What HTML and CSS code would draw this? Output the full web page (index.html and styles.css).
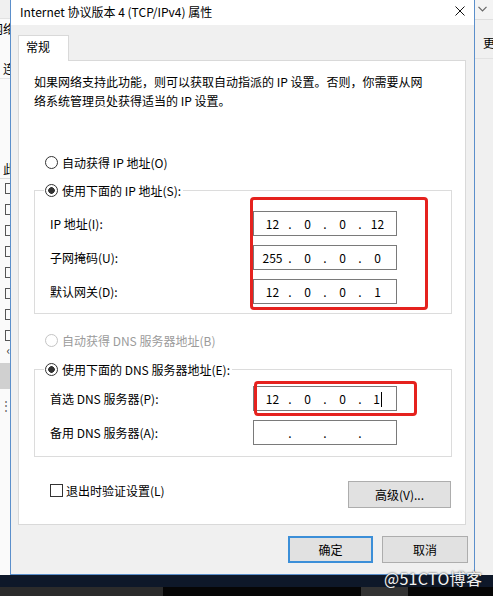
FILE: index.html
```html
<!DOCTYPE html>
<html lang="zh-CN">
<head>
<meta charset="utf-8">
<title>Internet 协议版本 4 (TCP/IPv4) 属性</title>
<link rel="stylesheet" href="styles.css">
</head>
<body>
<div class="screen">
  <div class="desk">
    <div class="bg-left">
      <div class="bl-top"></div>
      <div class="bl-row bl-t1"><span>网络</span></div>
      <div class="bl-row bl-t2"><span>连</span></div>
      <div class="bl-row bl-t3"><span>此</span></div>
      <div class="bl-checks">
        <i></i><i></i><i></i><i></i><i></i><i></i><i></i><i></i>
      </div>
      <div class="bl-arrow">‹</div>
      <div class="bl-gray"></div>
      <div class="bl-dots">⋮</div>
    </div>

    <div class="dialog">
      <div class="titlebar">
        <span class="title">Internet 协议版本 4 (TCP/IPv4) 属性</span>
        <span class="close"><svg width="10" height="10" viewBox="0 0 10 10"><path d="M0.5 0.5 L9.5 9.5 M9.5 0.5 L0.5 9.5" stroke="#111" stroke-width="1" fill="none"/></svg></span>
      </div>
      <div class="body">
        <div class="tabs"><div class="tab">常规</div></div>
        <div class="panel">
          <p class="intro">如果网络支持此功能，则可以获取自动指派的 IP 设置。否则，你需要从网<br>络系统管理员处获得适当的 IP 设置。</p>

          <div class="opt opt1"><span class="radio"></span><span>自动获得 IP 地址(O)</span></div>

          <fieldset class="group group1">
            <legend><span class="radio on"></span><span>使用下面的 IP 地址(S):</span></legend>
            <div class="gbody gbody1">
              <div class="fields">
                <span class="lbl">IP 地址(I):</span>
                <div class="ip"><span class="seg">12</span><span class="dot">.</span><span class="seg">0</span><span class="dot">.</span><span class="seg">0</span><span class="dot">.</span><span class="seg">12</span></div>
                <span class="lbl">子网掩码(U):</span>
                <div class="ip"><span class="seg">255</span><span class="dot">.</span><span class="seg">0</span><span class="dot">.</span><span class="seg">0</span><span class="dot">.</span><span class="seg">0</span></div>
                <span class="lbl">默认网关(D):</span>
                <div class="ip"><span class="seg">12</span><span class="dot">.</span><span class="seg">0</span><span class="dot">.</span><span class="seg">0</span><span class="dot">.</span><span class="seg">1</span></div>
                <div class="mark mark1"></div>
              </div>
            </div>
          </fieldset>

          <div class="opt opt2 disabled"><span class="radio off"></span><span>自动获得 DNS 服务器地址(B)</span></div>

          <fieldset class="group group2">
            <legend><span class="radio on"></span><span>使用下面的 DNS 服务器地址(E):</span></legend>
            <div class="gbody gbody2">
              <div class="fields">
                <span class="lbl">首选 DNS 服务器(P):</span>
                <div class="ip"><span class="seg">12</span><span class="dot">.</span><span class="seg">0</span><span class="dot">.</span><span class="seg">0</span><span class="dot">.</span><span class="seg">1<span class="caret"></span></span></div>
                <span class="lbl">备用 DNS 服务器(A):</span>
                <div class="ip"><span class="seg"></span><span class="dot">.</span><span class="seg"></span><span class="dot">.</span><span class="seg"></span><span class="dot">.</span><span class="seg"></span></div>
                <div class="mark mark2"></div>
              </div>
            </div>
          </fieldset>

          <div class="bottom-row">
            <div class="check"><span class="box"></span><span>退出时验证设置(L)</span></div>
            <div class="btn adv">高级(V)...</div>
          </div>
        </div>
        <div class="buttons">
          <div class="btn ok">确定</div>
          <div class="btn cancel">取消</div>
        </div>
      </div>
    </div>

    <div class="bg-right">
      <div class="br-top"><svg class="chev" width="9" height="6" viewBox="0 0 9 6"><path d="M0.5 0.8 L4.5 4.8 L8.5 0.8" stroke="#666" stroke-width="1.2" fill="none"/></svg></div>
      <div class="br-row"><span>更</span></div>
    </div>
  </div>
  <div class="taskbar">
    <div class="tb-top"></div>
    <div class="tb-bottom">
      <span class="s1"></span><span class="s2"></span><span class="s3"></span><span class="s4"></span>
    </div>
  </div>
  <div class="watermark">@51CTO博客</div>
</div>
</body>
</html>
```

FILE: styles.css
```css
html, body {
  margin: 0;
  padding: 0;
}
body {
  font-family: "Noto Sans CJK SC", "Noto Sans", sans-serif;
  font-size: 12px;
  color: #000;
  background: #0d1626;
}
.screen {
  position: relative;
  width: 493px;
  height: 596px;
  overflow: hidden;
}
.desk {
  display: flex;
  height: 575px;
}

/* background window, left */
.bg-left {
  width: 10px;
  flex: none;
  background: #fafafa;
  overflow: hidden;
  display: flex;
  flex-direction: column;
}
.bl-top {
  height: 18px;
  background: #f0f0f0;
  border-bottom: 1px solid #e2e2e2;
}
.bl-row {
  display: flex;
  justify-content: flex-end;
  height: 19px;
  line-height: 19px;
  font-size: 12px;
  white-space: nowrap;
}
.bl-row span {
  margin-right: -5px;
}
.bl-t1 { margin-top: 0; }
.bl-t2 {
  margin-top: 21px;
  border-bottom: 1px solid #e5e5e5;
}
.bl-t3 {
  margin-top: 80px;
  border-bottom: 1px solid #dcdcdc;
}
.bl-checks {
  display: flex;
  flex-direction: column;
  align-items: flex-end;
  gap: 10px;
  padding-top: 4px;
}
.bl-checks i {
  display: block;
  width: 4px;
  height: 9px;
  border: 1px solid #555;
  border-right: none;
  margin-right: 0;
}
.bl-arrow {
  text-align: right;
  font-size: 12px;
  line-height: 14px;
  height: 14px;
  margin-top: 2px;
  color: #333;
}
.bl-gray {
  height: 26px;
  margin-top: 6px;
  background: #d0d0d0;
}
.bl-dots {
  text-align: right;
  line-height: 16px;
  margin-top: 8px;
  color: #666;
}

/* dialog */
.dialog {
  width: 465px;
  height: 575px;
  flex: none;
  box-sizing: border-box;
  border: 1px solid #5b8fcb;
  border-top: none;
  display: flex;
  flex-direction: column;
}
.titlebar {
  height: 25px;
  flex: none;
  background: #fff;
  display: flex;
  justify-content: space-between;
  align-items: flex-start;
  padding-left: 9px;
}
.title {
  line-height: 23px;
}
.close {
  width: 10px;
  height: 10px;
  margin-top: 6px;
  margin-right: 9px;
  display: flex;
}
.body {
  flex: 1;
  background: #f0f0f0;
  padding: 10px 8px 0 7px;
}
.tabs {
  display: flex;
}
.tab {
  width: 51px;
  height: 26px;
  box-sizing: border-box;
  border: 1px solid #d9d9d9;
  border-bottom: none;
  background: #fff;
  margin-bottom: -1px;
  position: relative;
  z-index: 1;
  padding-left: 7px;
  line-height: 22px;
}
.panel {
  border: 1px solid #d9d9d9;
  background: #fff;
  padding: 0 0 16px 0;
}
.intro {
  margin: 11px 0 0 15px;
  line-height: 19px;
}
.opt {
  display: flex;
  align-items: center;
  gap: 4px;
  height: 19px;
  margin-left: 26px;
}
.opt1 { margin-top: 43px; }
.opt2 { margin-top: 17px; }
.disabled { color: #9b9b9b; }

.radio {
  width: 13px;
  height: 13px;
  box-sizing: border-box;
  border: 1px solid #333;
  border-radius: 50%;
  background: #fff;
  flex: none;
}
.radio.on {
  background: radial-gradient(circle, #333 0 3px, #fff 3.6px);
}
.radio.off {
  border-color: #c4c4c4;
}

.group {
  width: 418px;
  box-sizing: border-box;
  margin: 9px 0 0 15px;
  padding: 0;
  border: 1px solid #dcdcdc;
  min-width: 0;
}
.group2 { margin-top: 10px; }
.group legend {
  display: flex;
  align-items: center;
  gap: 4px;
  margin-left: 9px;
  padding: 0 2px 0 1px;
  line-height: 19px;
  height: 19px;
}
.gbody1 { padding: 11px 0 9px 15px; }
.gbody2 { padding: 7px 0 11px 15px; }
.fields {
  position: relative;
  display: grid;
  grid-template-columns: 203px 144px;
  grid-auto-rows: 25px;
  row-gap: 9px;
}
.lbl {
  align-self: center;
  line-height: 19px;
}
.ip {
  width: 144px;
  height: 25px;
  box-sizing: border-box;
  border: 1px solid #7a7a7a;
  background: #fff;
  display: flex;
  padding-left: 4px;
  line-height: 23px;
}
.seg {
  width: 29px;
  text-align: center;
  white-space: nowrap;
}
.dot {
  width: 6px;
  text-align: center;
}
.caret {
  display: inline-block;
  width: 1px;
  height: 15px;
  background: #000;
  vertical-align: middle;
  margin-left: 1px;
  margin-top: -2px;
}
.mark {
  position: absolute;
  box-sizing: border-box;
  border: 3px solid #e5221e;
  border-radius: 4px;
  pointer-events: none;
}
.mark1 {
  left: 200px;
  top: -14px;
  width: 178px;
  height: 113px;
}
.mark2 {
  left: 204px;
  top: -5px;
  width: 163px;
  height: 35px;
}

.bottom-row {
  display: flex;
  justify-content: space-between;
  align-items: flex-start;
  margin: 24px 14px 0 31px;
}
.check {
  display: flex;
  align-items: center;
  gap: 3px;
  line-height: 19px;
}
.box {
  width: 13px;
  height: 13px;
  box-sizing: border-box;
  border: 1px solid #333;
  background: #fff;
}
.btn {
  height: 27px;
  box-sizing: border-box;
  border: 1px solid #adadad;
  background: #e1e1e1;
  display: flex;
  align-items: center;
  justify-content: center;
}
.adv { width: 103px; }
.buttons {
  display: flex;
  justify-content: flex-end;
  gap: 9px;
  margin-top: 11px;
  margin-right: -2px;
}
.ok {
  width: 85px;
  border: 2px solid #3c8fd8;
}
.cancel { width: 86px; }

/* background window, right */
.bg-right {
  flex: 1;
  background: #f0f0f0;
  overflow: hidden;
  display: flex;
  flex-direction: column;
}
.br-top {
  height: 20px;
  box-sizing: border-box;
  border-bottom: 1px solid #dedede;
  background: #f4f4f4;
  padding: 6px 0 0 3px;
}
.chev {
  display: block;
}
.br-row {
  margin-top: 13px;
  height: 19px;
  line-height: 19px;
  padding-left: 8px;
  white-space: nowrap;
  border-bottom: 1px solid #e2e2e2;
  padding-bottom: 6px;
}

/* taskbar */
.taskbar {
  height: 21px;
  display: flex;
  flex-direction: column;
}
.tb-top {
  height: 12px;
  background: #0e1829;
}
.tb-bottom {
  height: 9px;
  display: flex;
  background: #050505;
}
.tb-bottom .s1 { width: 163px; background: #2b2b2b; }
.tb-bottom .s2 { width: 198px; background: #060606; }
.tb-bottom .s3 { width: 47px; background: #333; }
.tb-bottom .s4 { flex: 1; background: #060606; }

.watermark {
  position: absolute;
  left: 384px;
  top: 567px;
  font-size: 16px;
  line-height: 22px;
  color: #f2f2f2;
  letter-spacing: 0.3px;
  text-shadow: 0 0 2px #222;
  white-space: nowrap;
}
```
